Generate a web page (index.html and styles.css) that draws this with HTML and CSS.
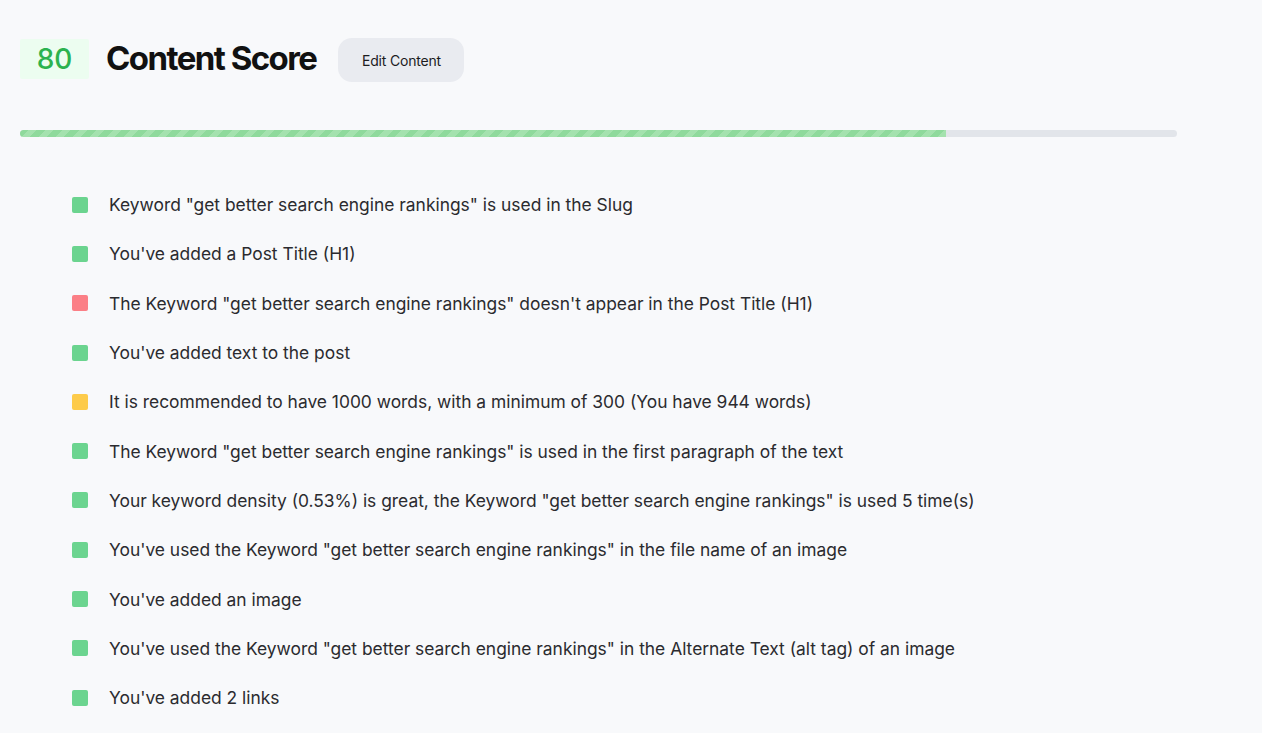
FILE: index.html
```html
<!DOCTYPE html>
<html>
<head>
<meta charset="utf-8">
<link rel="stylesheet" href="styles.css">
</head>
<body>
<div class="page">
  <header class="head">
    <div class="score">80</div>
    <h1 class="title">Content Score</h1>
    <button class="edit">Edit Content</button>
  </header>
  <div class="bar"><div class="fill" style="width:80%"></div></div>
  <ul class="checks">
    <li><span class="dot ok"></span>Keyword "get better search engine rankings" is used in the Slug</li>
    <li><span class="dot ok"></span>You've added a Post Title (H1)</li>
    <li><span class="dot bad"></span>The Keyword "get better search engine rankings" doesn't appear in the Post Title (H1)</li>
    <li><span class="dot ok"></span>You've added text to the post</li>
    <li><span class="dot warn"></span>It is recommended to have 1000 words, with a minimum of 300 (You have 944 words)</li>
    <li><span class="dot ok"></span>The Keyword "get better search engine rankings" is used in the first paragraph of the text</li>
    <li><span class="dot ok"></span>Your keyword density (0.53%) is great, the Keyword "get better search engine rankings" is used 5 time(s)</li>
    <li><span class="dot ok"></span>You've used the Keyword "get better search engine rankings" in the file name of an image</li>
    <li><span class="dot ok"></span>You've added an image</li>
    <li><span class="dot ok"></span>You've used the Keyword "get better search engine rankings" in the Alternate Text (alt tag) of an image</li>
    <li><span class="dot ok"></span>You've added 2 links</li>
  </ul>
</div>
</body>
</html>
```
FILE: styles.css
```css
html, body {
  margin: 0;
  padding: 0;
  background: #f8f9fb;
  font-family: Inter, "Noto Sans", sans-serif;
  color: #2b2b2f;
}
.page {
  padding: 38px 85px 0 20px;
}
.head {
  display: flex;
  align-items: center;
  height: 44px;
}
.score {
  width: 69px;
  height: 40px;
  margin-top: -2px;
  background: #ecfdf0;
  color: #2cb24f;
  font-size: 28px;
  font-weight: 500;
  display: flex;
  align-items: center;
  justify-content: center;
  border-radius: 2px;
}
.title {
  margin: 0 0 5px 17px;
  font-size: 33px;
  line-height: 40px;
  font-weight: 700;
  letter-spacing: -1.55px;
  color: #111;
}
.edit {
  margin-left: 22px;
  height: 44px;
  width: 126px;
  border: none;
  border-radius: 14px;
  background: #e9ebf0;
  font-family: Inter, sans-serif;
  font-size: 14px;
  color: #1c1c1f;
  letter-spacing: -0.2px;
}
.bar {
  margin-top: 48px;
  height: 7px;
  border-radius: 4px;
  background: #e2e5ea;
  overflow: hidden;
}
.fill {
  height: 100%;
  background: repeating-linear-gradient(135deg, #8fda9c 0 6px, #a4e2ae 6px 12px);
}
.checks {
  list-style: none;
  margin: 43px 0 0 0;
  padding: 0 0 0 52px;
}
.checks li {
  display: flex;
  align-items: center;
  height: 49.3px;
  font-size: 17.4px;
}
.dot {
  width: 16px;
  height: 16px;
  border-radius: 2px;
  margin-right: 21px;
  flex: none;
}
.ok { background: #6bd48f; }
.bad { background: #fb7f86; }
.warn { background: #fdcb4a; }
```
